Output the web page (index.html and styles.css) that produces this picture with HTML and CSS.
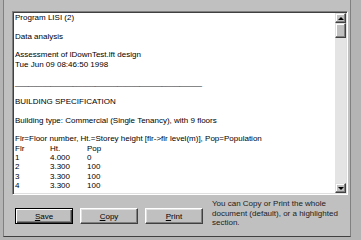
FILE: index.html
```html
<!DOCTYPE html>
<html lang="en">
<head>
    <meta charset="UTF-8">
    <title>Program LISI (2)</title>
    <link rel="stylesheet" href="styles.css">
</head>
<body>
    <div class="panel">
        <div class="report">
            <div class="doc">
                <div>Program LISI (2)</div>
                <div>&nbsp;</div>
                <div>Data analysis</div>
                <div>&nbsp;</div>
                <div>Assessment of lDownTest.lft design</div>
                <div>Tue Jun 09 08:46:50 1998</div>
                <div>&nbsp;</div>
                <div>__________________________________________</div>
                <div>&nbsp;</div>
                <div>BUILDING SPECIFICATION</div>
                <div>&nbsp;</div>
                <div>Building type: Commercial (Single Tenancy), with 9 floors</div>
                <div>&nbsp;</div>
                <div>Flr=Floor number, Ht.=Storey height [flr-&gt;flr level(m)], Pop=Population</div>
                <div class="row"><span>Flr</span><span>Ht.</span><span>Pop</span></div>
                <div class="row"><span>1</span><span>4.000</span><span>0</span></div>
                <div class="row"><span>2</span><span>3.300</span><span>100</span></div>
                <div class="row"><span>3</span><span>3.300</span><span>100</span></div>
                <div class="row"><span>4</span><span>3.300</span><span>100</span></div>
            </div>
            <div class="scrollbar">
                <div class="sb-btn"><span class="arrow up"></span></div>
                <div class="sb-thumb"></div>
                <div class="sb-track"></div>
                <div class="sb-btn"><span class="arrow down"></span></div>
            </div>
        </div>
        <div class="actions">
            <button class="btn default"><u>S</u>ave</button>
            <button class="btn"><u>C</u>opy</button>
            <button class="btn"><u>P</u>rint</button>
            <p class="hint">You can Copy or Print the whole document (default), or a highlighted section.</p>
        </div>
    </div>
</body>
</html>
```

FILE: styles.css
```css
html, body {
    margin: 0;
    padding: 0;
}
body {
    width: 361px;
    height: 240px;
    overflow: hidden;
    background-color: #b4b4b4;
    font-family: "Liberation Sans", Arial, sans-serif;
    font-size: 8px;
    color: #000;
}
.panel {
    margin-left: 3px;
    width: 348px;
    height: 237px;
    background-color: #c0c0c0;
    border-left: 1px solid #808080;
    border-right: 1px solid #808080;
    border-bottom: 1px solid #404040;
    box-sizing: border-box;
    padding-top: 11px;
}
.report {
    display: flex;
    margin-left: 8px;
    width: 336px;
    height: 184px;
    box-sizing: border-box;
    background-color: #fff;
    border-top: 1px solid #808080;
    border-left: 1px solid #808080;
    border-bottom: 1px solid #fff;
    border-right: 1px solid #fff;
    box-shadow: inset 1px 1px #404040, inset -1px -1px #dfdfdf;
    padding: 1px;
}
.doc {
    flex: 1;
    padding-left: 1px;
    line-height: 9.33px;
    white-space: nowrap;
    overflow: hidden;
}
.row {
    display: grid;
    grid-template-columns: 35px 37px auto;
}
.scrollbar {
    width: 11px;
    display: flex;
    flex-direction: column;
    background-color: #e4e4e4;
}
.sb-btn,
.sb-thumb {
    box-sizing: border-box;
    background-color: #c0c0c0;
    border-top: 1px solid #dfdfdf;
    border-left: 1px solid #dfdfdf;
    border-right: 1px solid #404040;
    border-bottom: 1px solid #404040;
    box-shadow: inset -1px -1px #808080, inset 1px 1px #fff;
}
.sb-btn {
    height: 10px;
    display: flex;
    align-items: center;
    justify-content: center;
}
.sb-thumb {
    height: 15px;
}
.sb-track {
    flex: 1;
}
.arrow {
    width: 0;
    height: 0;
    border-left: 3px solid transparent;
    border-right: 3px solid transparent;
}
.arrow.up {
    border-bottom: 3px solid #000;
}
.arrow.down {
    border-top: 3px solid #000;
}
.actions {
    display: flex;
    align-items: flex-start;
    margin-top: 4px;
    padding-left: 11px;
}
.btn {
    width: 58px;
    height: 16px;
    margin-top: 9px;
    margin-right: 7px;
    padding: 0;
    font-family: "Liberation Sans", Arial, sans-serif;
    font-size: 8px;
    color: #000;
    background-color: #c0c0c0;
    border-top: 1px solid #fff;
    border-left: 1px solid #fff;
    border-right: 1px solid #404040;
    border-bottom: 1px solid #404040;
    box-shadow: inset -1px -1px #808080, inset 1px 1px #dfdfdf;
}
.btn.default {
    border: 1px solid #000;
    box-shadow: inset 1px 1px #fff, inset -1px -1px #404040, inset -2px -2px #808080;
}
.hint {
    margin: 0 0 0 2px;
    width: 134px;
    line-height: 9.6px;
    color: #202020;
}
```
